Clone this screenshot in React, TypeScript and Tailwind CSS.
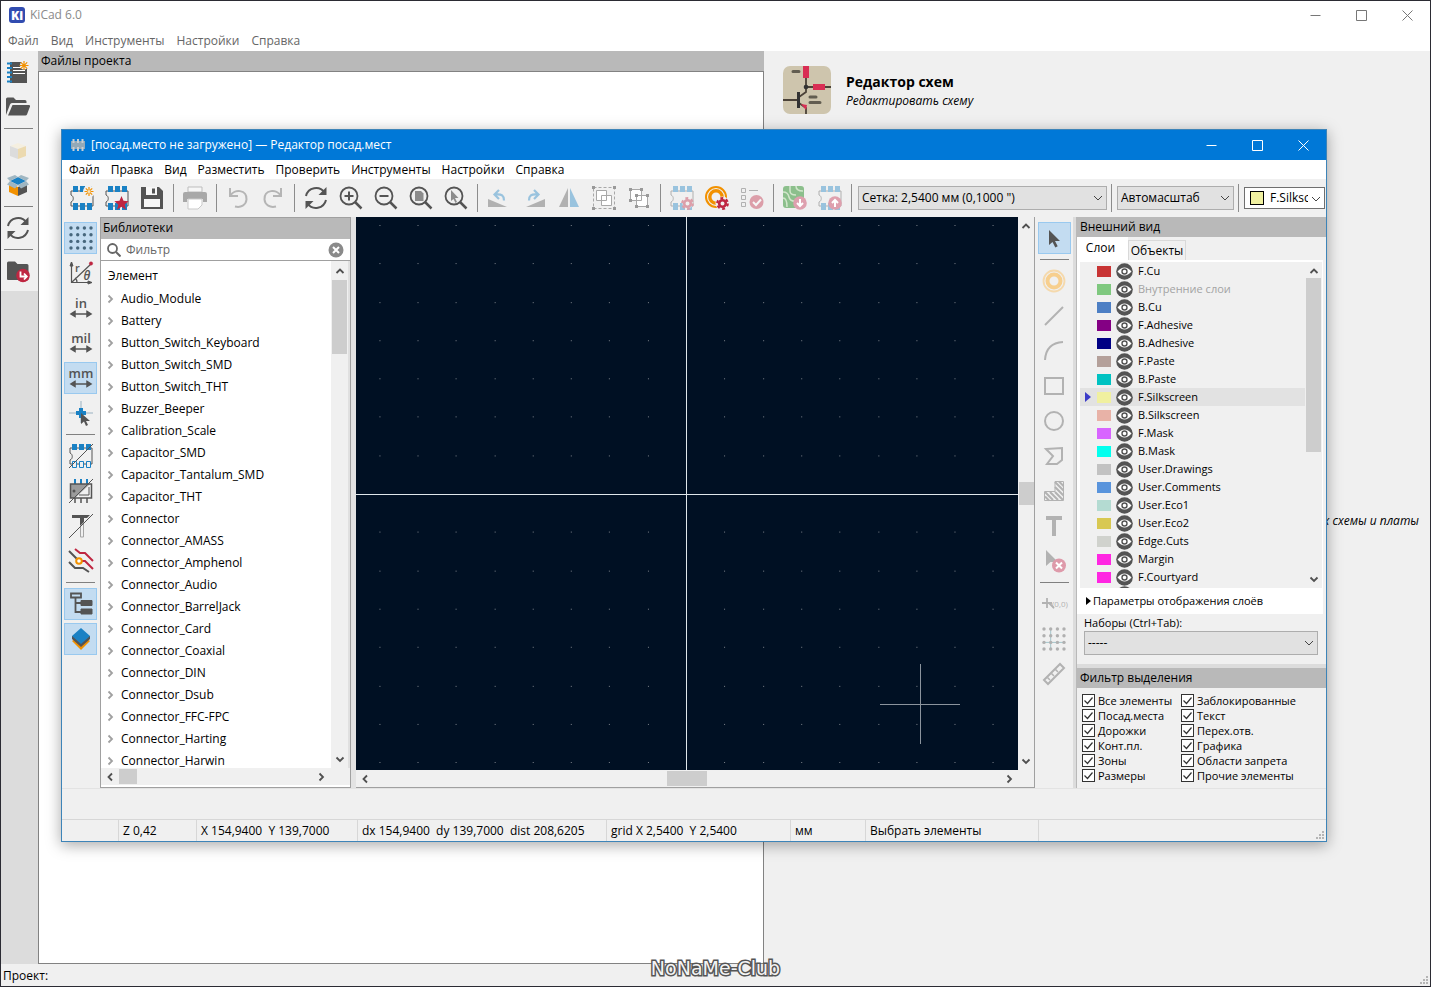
import { useState } from "react";
import type { ReactNode } from "react";

const dark = "#545454";
const blue = "#1a81c4";
const red = "#bf2641";
const orange = "#f29100";

const chip = (
  <g>
    <path d="M1 5v4c3 1 3 6 0 7v4h22V5z" fill="none" stroke={dark} />
    <path d="M3 0h5v6H3zM10 0h5v6h-5zM17 0h5v6h-5zM3 17h5v7H3zM10 17h5v7h-5zM17 17h5v7h-5z" fill={blue} />
  </g>
);

const spark = (
  <g>
    <circle cx="19" cy="5.500" r="6" fill="#f0f0f0" />
    <path d="M19 1v9M14.500 5.500h9M15.800 2.300l6.400 6.400M22.200 2.300l-6.400 6.400" stroke={orange} strokeWidth="1.200" />
    <circle cx="19" cy="5.500" r="1.500" fill="#f7e4c0" />
  </g>
);

const gear = (
  <g>
    <circle cx="17.500" cy="17.500" r="5.300" fill="none" stroke={red} strokeWidth="2.200" strokeDasharray="2.900 2.650" />
    <circle cx="17.500" cy="17.500" r="3.300" fill="none" stroke={red} strokeWidth="2.600" />
  </g>
);

const unit = (name: string) => (
  <g>
    <text x="12" y="12" textAnchor="middle" fontSize="13" fontFamily="Open Sans, sans-serif" fontWeight="600" fill={dark}>{name}</text>
    <path d="M4 18h16M6 15.500L2 18l4 2.500zM18 15.500l4 2.500-4 2.500z" fill={dark} stroke={dark} strokeWidth="1.500" />
  </g>
);

const lens = (
  <g fill="none" stroke={dark}>
    <circle cx="10" cy="10" r="8.500" strokeWidth="1.800" />
    <path d="M16 16l6.500 6.500" strokeWidth="2.500" />
  </g>
);

const icons: Record<string, ReactNode> = {
  newProject: (
    <g>
      <path d="M4 2h17v21H4z" fill={dark} />
      <path d="M1 3.500h5M1 8h5M1 12.500h5M1 17h5M1 21.500h5" stroke={blue} strokeWidth="2" />
      <path d="M7 7.500h9M7 10.500h12M7 13.500h12" stroke="#fff" />
      <circle cx="18" cy="5.500" r="4" fill="#f0f0f0" />
      <path d="M18 1v9M13.500 5.500h9M14.800 2.300l6.400 6.400M21.200 2.300l-6.400 6.400" stroke={orange} strokeWidth="1.200" />
    </g>
  ),
  folderOpen: (
    <g fill={dark}>
      <path d="M0 20V4q0-1.500 1.500-1.500h6L10 5h9q1.500 0 1.500 1.500V8H6q-1.500 0-2 1.500z" />
      <path d="M6.500 10H23q1.500 0 1 1.500l-3 8q-.5 1-1.500 1H2z" />
    </g>
  ),
  archive: (
    <g>
      <path d="M4 8l8-3 8 3-8 3z" fill="#f5efe0" />
      <path d="M4 8l8 3v10l-8-3z" fill="#dcdcdc" />
      <path d="M20 8l-8 3v10l8-3z" fill="#ecdab0" />
    </g>
  ),
  unarchive: (
    <g>
      <path d="M3 10l9 4v9l-9-4z" fill={orange} />
      <path d="M21 10l-9 4v9l9-4z" fill={dark} />
      <path d="M4 8l8-4 8 4-8 4z" fill={blue} />
      <path d="M4 8L1 5l8-3 3 2zM20 8l3-3-8-3-3 2zM4 8l8 4-3 3.500-8-4zM20 8l-8 4 3 3.500 8-4z" fill="#9fb6c2" />
    </g>
  ),
  refresh: (
    <g>
      <path d="M2 10A10.300 10.300 0 0 1 20.500 6.500M22 14A10.300 10.300 0 0 1 3.500 17.500" fill="none" stroke={dark} strokeWidth="2" />
      <path d="M22.500 1v8h-8zM1.500 23v-8h8z" fill={dark} />
    </g>
  ),
  browse: (
    <g>
      <path d="M1 20V4q0-1.500 1.500-1.500H9L11.500 5H21q1.500 0 1.500 1.500V21H2q-1 0-1-1z" fill={dark} />
      <circle cx="17" cy="16.500" r="6.800" fill={red} />
      <path d="M14.500 12.500v5h6M18 14.500l2.800 3L18 20.500" fill="none" stroke="#fff" strokeWidth="1.800" />
    </g>
  ),
  newFootprint: <g>{chip}{spark}</g>,
  wizard: (
    <g>
      {chip}
      <path d="M16.500 10l2 4.800 5.200.4-4 3.300 1.300 5.200-4.500-2.900-4.500 2.900 1.300-5.200-4-3.300 5.200-.4z" fill={red} />
    </g>
  ),
  save: (
    <g>
      <path d="M1 1h18l4 4v18H1z" fill={dark} />
      <path d="M6 1h11v8H6zM4 13h16v8H4z" fill="#f7f7f7" />
      <path d="M12 2.500h3v5h-3z" fill={dark} />
    </g>
  ),
  print: (
    <g>
      <path d="M5 1h14v5H5z" fill="#f6f6f6" stroke="#bdbdbd" />
      <path d="M0 8q0-2 2-2h20q2 0 2 2v8h-4v-3H4v3H0z" fill="#a8a8a8" />
      <path d="M5 13h14v6l-4 4H5z" fill="#fff" stroke="#c9c9c9" />
    </g>
  ),
  undo: <path d="M4 2v8h8M4.500 9.500C8 3 21 3 20.500 13.500 20 19 15 22 9 20.500" fill="none" stroke="#b5b5b5" strokeWidth="2" />,
  redo: <path d="M20 2v8h-8M19.500 9.500C16 3 3 3 3.500 13.500 4 19 9 22 15 20.500" fill="none" stroke="#b5b5b5" strokeWidth="2" />,
  zoomIn: <g>{lens}<path d="M5.500 10h9M10 5.500v9" stroke={dark} strokeWidth="2" /></g>,
  zoomOut: <g>{lens}<path d="M5.500 10h9" stroke={dark} strokeWidth="2" /></g>,
  zoomFit: <g>{lens}<path d="M6 5h6l2.500 2.500V15H6z" fill="#8c8c8c" /></g>,
  zoomSel: <g>{lens}<path d="M7 4v11l2.500-2 2 4 1.500-1-2-4h3.500z" fill="#8c8c8c" /></g>,
  rotateLeft: (
    <g opacity=".4">
      <path d="M1 13l19 8H1z" fill={dark} />
      <path d="M8 8.500c7-1 9 1.500 9 6M12 4L7.500 8.500 12 13" fill="none" stroke={blue} strokeWidth="2.200" />
    </g>
  ),
  rotateRight: (
    <g opacity=".4">
      <path d="M23 13v8H4z" fill={dark} />
      <path d="M16 8.500c-7-1-9 1.500-9 6M12 4l4.500 4.500L12 13" fill="none" stroke={blue} strokeWidth="2.200" />
    </g>
  ),
  mirror: (
    <g opacity=".4">
      <path d="M11 2v19H2z" fill={dark} />
      <path d="M13 2v19h9z" fill={blue} />
    </g>
  ),
  group: (
    <g stroke="#a8a8a8" fill="#fff">
      <path d="M1.500 1.500h21v21h-21z" fill="none" strokeDasharray="3 2" />
      <path d="M4.500 4.500h10v10h-10zM9.500 9.500h10v10h-10z" />
      <path d="M0 0h3v3H0zM21 0h3v3h-3zM0 21h3v3H0zM21 21h3v3h-3z" fill="#999" stroke="none" />
    </g>
  ),
  ungroup: (
    <g stroke="#a8a8a8" fill="#fff">
      <path d="M3.500 3.500h11v11h-11zM9.500 9.500h11v11h-11z" />
      <path d="M2 2h3v3H2zM13 2h3v3h-3zM2 13h3v3H2zM8 8h3v3H8zM19 8h3v3h-3zM8 19h3v3H8zM19 19h3v3h-3z" fill="#999" stroke="none" />
    </g>
  ),
  fpProps: <g opacity=".4">{chip}<circle cx="17.500" cy="17.500" r="5" fill="#f0f0f0" />{gear}</g>,
  padSettings: (
    <g>
      <circle cx="11" cy="11" r="10" fill="none" stroke={orange} strokeWidth="2" />
      <circle cx="11" cy="11" r="6.200" fill="none" stroke={orange} strokeWidth="3.400" />
      <circle cx="17.500" cy="17.500" r="7" fill="#f0f0f0" />
      {gear}
    </g>
  ),
  check: (
    <g opacity=".4">
      <path d="M1.500 2.500h4v4h-4zM1.500 9.500h4v4h-4zM1.500 16.500h4v4h-4z" fill="none" stroke={dark} />
      <path d="M9 4.500h9" stroke={dark} />
      <circle cx="16.500" cy="16" r="7" fill={red} />
      <path d="M13 16l3 3 5-5.500" fill="none" stroke="#fff" strokeWidth="2" />
    </g>
  ),
  fromBoard: (
    <g>
      <g opacity=".6">
        <rect width="21" height="22" rx="3" fill="#4aa04a" />
        <path d="M0 6q5 0 6 5t8 4M0 12q4 0 4 9M7 0v5q0 4 6 4M13 0q0 5 7 5" fill="none" stroke="#bfe0b4" strokeWidth="1.500" />
      </g>
      <circle cx="17" cy="17" r="6.800" fill="#dea0ae" />
      <path d="M17 13v7M14 17l3 3 3-3" fill="none" stroke="#fff" strokeWidth="2" />
    </g>
  ),
  toBoard: (
    <g>
      <g opacity=".4">{chip}</g>
      <circle cx="17" cy="17" r="6.800" fill="#dea0ae" />
      <path d="M17 21v-7M14 17l3-3 3 3" fill="none" stroke="#fff" strokeWidth="2" />
    </g>
  ),
  grid: (
    <g fill="#47677d">
      {[2, 8.7, 15.4, 22].map((y) => [2, 8.7, 15.4, 22].map((x) => <circle key={`${x}-${y}`} cx={x} cy={y} r="1.700" />))}
    </g>
  ),
  polar: (
    <g fill="none" stroke={dark}>
      <path d="M2.500 1v20.500H23M2.500 21.500L22 3M8 21.500q0-3-2-4.500" strokeWidth="1.200" />
      <path d="M1 5l1.500-4L4 5zM19 20l4 1.500-4 1.500z" fill={dark} />
      <circle cx="22" cy="2.500" r="1.700" fill={red} stroke={red} strokeWidth=".5" />
      <g fill={dark} stroke="none" fontFamily="Open Sans, sans-serif" fontWeight="600">
        <text x="6" y="11" fontSize="11">r</text>
        <text x="14.500" y="18.500" fontSize="12" fontStyle="italic">θ</text>
      </g>
    </g>
  ),
  inch: unit("in"),
  mil: unit("mil"),
  mm: unit("mm"),
  cursor: (
    <g>
      <path d="M12 0v22M0 12h24" stroke="#9ab2c2" />
      <path d="M12 7v10M7 12h10" stroke={blue} strokeWidth="4" />
      <path d="M12 12v11l3-2.500 2 4.500 2-1-2-4h4z" fill={dark} />
    </g>
  ),
  padSketch: (
    <g>
      <path d="M1 4v5c3 1 3 6 0 7v4h22V4z" fill="none" stroke={dark} />
      <path d="M3 0h5v6H3zM10 0h5v6h-5zM17 0h5v6h-5z" fill={blue} />
      <path d="M3.500 17.500h4v6h-4zM10.500 17.500h4v6h-4zM17.500 17.500h4v6h-4z" fill="#f0f0f0" stroke={blue} />
      <path d="M0 24L24 0" stroke={dark} />
    </g>
  ),
  graphicSketch: (
    <g>
      <path d="M6 0v5M12 0v5M18 0v5" stroke={blue} strokeWidth="2" />
      <path d="M6 19v5M12 19v5M18 19v5" stroke={dark} strokeWidth="1.500" />
      <path d="M1 5h20L6 19H1z" fill="#9b9b9b" />
      <path d="M1.500 5v14h21V5z" fill="none" stroke={dark} strokeWidth="1.500" />
      <path d="M20 8v8H10" fill="none" stroke={dark} />
      <path d="M0 24L24 0" stroke={dark} />
      <circle cx="5" cy="12" r="1.500" fill={dark} />
    </g>
  ),
  textSketch: (
    <g>
      <path d="M3 1h18l-3 3h-3v4l-4 4V4H3z" fill={dark} />
      <path d="M11.500 13v10h3V10" fill="none" stroke="#a5a5a5" />
      <path d="M0 24L24 0" stroke={dark} />
    </g>
  ),
  contrast: (
    <g fill="none" strokeWidth="2">
      <path d="M6 0l5 4h5l8 8M12 12h4l8 8" stroke={red} />
      <path d="M0 2l8 8M0 13l6 6h8l6 4" stroke={dark} />
      <circle cx="10" cy="12" r="2.800" fill="#fff" stroke={orange} />
    </g>
  ),
  tree: (
    <g>
      <path d="M2 1.500h10v4H2z" fill="none" stroke={dark} strokeWidth="1.800" />
      <path d="M6.500 6v14H13M6.500 11H13" fill="none" stroke={dark} strokeWidth="1.800" />
      <path d="M12 8.500h11v5H12zM12 17h11v5H12z" fill={dark} stroke={dark} strokeLinejoin="round" />
    </g>
  ),
  layers: (
    <g>
      <path d="M12 8l9 6-9 9-9-9z" fill={orange} />
      <path d="M3 12l9 8 9-8v-3H3z" fill={dark} />
      <path d="M12 1l9 8-9 8-9-8z" fill={blue} />
    </g>
  ),
  pointer: <path d="M7 4v15l3.500-3 2.800 5.500 2.400-1.200-2.700-5.300H18z" fill={dark} />,
  pad: (
    <g fill="none" stroke="#f7cf8e">
      <circle cx="12" cy="12" r="10.500" strokeWidth="1.800" opacity=".7" />
      <circle cx="12" cy="12" r="6.500" strokeWidth="4" />
    </g>
  ),
  line: <path d="M3 21L21 3" stroke="#b2b2b2" strokeWidth="2" />,
  arc: <path d="M3 21Q4 4 21 3" fill="none" stroke="#b2b2b2" strokeWidth="2" />,
  rect: <path d="M3 4h18v16H3z" fill="none" stroke="#b2b2b2" strokeWidth="2" />,
  circle: <circle cx="12" cy="12" r="9" fill="none" stroke="#b2b2b2" strokeWidth="2" />,
  poly: <path d="M4 5l16-1v12l-5 4H5l6-8z" fill="none" stroke="#b2b2b2" strokeWidth="2" />,
  zone: (
    <g fill="none" stroke="#b2b2b2">
      <path d="M13 2.500h8.500v19h-19v-9H13z" />
      <path d="M13 3l8.500 8.500M13 8l8.500 8.500M3 13l8 8M8 13l8 8M13 13l8 8M17 2.500l4.500 4.500M3 17.500l4 4" strokeWidth="2" />
    </g>
  ),
  text: <path d="M4 2h16v4h-6v16h-4V6H4z" fill="#b2b2b2" />,
  erase: (
    <g>
      <path d="M4 1v16l4.500-4H16z" fill="#b2b2b2" />
      <circle cx="17" cy="16.500" r="7" fill="#de9aaa" />
      <path d="M14 13.500l6 6M20 13.500l-6 6" stroke="#fff" strokeWidth="2" />
    </g>
  ),
  anchor: (
    <g fill="none" stroke="#b2b2b2">
      <path d="M0 11h10M5 6v10M7 11l5 5" strokeWidth="1.800" />
      <text x="10" y="15" fontSize="8" fontFamily="Open Sans, sans-serif" fill="#b2b2b2" stroke="none">(0,0)</text>
    </g>
  ),
  gridOrigin: (
    <g>
      <path d="M8.700 1v22M1 15.400h22" stroke="#a5c6cc" />
      <g fill="#b0b0b0">
        {[2, 8.7, 15.4, 22].map((y) => [2, 8.7, 15.4, 22].map((x) => <circle key={`${x}-${y}`} cx={x} cy={y} r="1.700" />))}
      </g>
    </g>
  ),
  measure: (
    <g fill="none" stroke="#b2b2b2">
      <path d="M2 18L18 2l4 4L6 22z" strokeWidth="2" />
      <path d="M8 18l-2.500-2.500M12 14l-2.500-2.500M16 10l-2.500-2.500" strokeWidth="1.500" />
    </g>
  ),
};

function Icon({ name }: { name: string }) {
  return (
    <svg viewBox="0 0 24 24" className="size-6 shrink-0 overflow-visible" aria-hidden="true">
      {icons[name]}
    </svg>
  );
}

function HTool({ name }: { name: string }) {
  if (name === "|") return <div className="flex w-2 shrink-0 justify-center"><div className="h-7 w-px bg-[#8c8c8c]" /></div>;
  return (
    <button type="button" aria-label={name} className="flex h-8 w-[35px] shrink-0 items-center justify-center">
      <Icon name={name} />
    </button>
  );
}

function VTools({ items, active = [] }: { items: string[]; active?: string[] }) {
  return (
    <div className="flex flex-col items-center gap-[3px]">
      {items.map((name, i) =>
        name === "|" ? (
          <div key={i} className="flex h-[5px] items-center"><div className="h-px w-[29px] bg-[#808080]" /></div>
        ) : (
          <button
            key={i}
            type="button"
            aria-label={name}
            className={`flex h-8 w-[33px] items-center justify-center border ${
              active.includes(name) ? "border-[#99c9ef] bg-[#c3dcf1]" : "border-transparent"
            }`}
          >
            <Icon name={name} />
          </button>
        )
      )}
    </div>
  );
}

function Chevron({ dir, className = "" }: { dir: "up" | "down" | "left" | "right"; className?: string }) {
  const d = {
    up: "M1.500 7L5 3.500 8.500 7",
    down: "M1.500 3.500L5 7l3.500-3.500",
    left: "M7 1.500L3.500 5 7 8.500",
    right: "M3.500 1.500L7 5 3.500 8.500",
  }[dir];
  return (
    <svg viewBox="0 0 10 10" className={`size-2.5 shrink-0 ${className}`} aria-hidden="true">
      <path d={d} fill="none" stroke="currentColor" strokeWidth="1.800" />
    </svg>
  );
}

function Combo({ label, value, className = "" }: { label: string; value: string; className?: string }) {
  return (
    <div className={`relative h-6 ${className}`}>
      <select aria-label={label} className="size-full appearance-none border border-[#adadad] bg-[#e1e1e1] pl-[3px] pr-5">
        <option>{value}</option>
      </select>
      <svg viewBox="0 0 10 10" className="pointer-events-none absolute top-[7px] right-1 size-2.5" aria-hidden="true">
        <path d="M1 3l4 4 4-4" fill="none" stroke="#444" />
      </svg>
    </div>
  );
}

function WindowButtons({ className }: { className: string }) {
  return (
    <div className={`flex ${className}`}>
      {["M.5 5.500h10", "M.5.5h10v10H.5z", "M.5.5l10 10M10.500.5l-10 10"].map((d, i) => (
        <button key={d} type="button" aria-label={["Свернуть", "Развернуть", "Закрыть"][i]} className="flex h-7 w-[46px] items-center justify-center">
          <svg viewBox="0 0 11 11" className="size-[11px]"><path d={d} fill="none" stroke="currentColor" /></svg>
        </button>
      ))}
    </div>
  );
}

const libraries = [
  "Audio_Module", "Battery", "Button_Switch_Keyboard", "Button_Switch_SMD", "Button_Switch_THT",
  "Buzzer_Beeper", "Calibration_Scale", "Capacitor_SMD", "Capacitor_Tantalum_SMD", "Capacitor_THT",
  "Connector", "Connector_AMASS", "Connector_Amphenol", "Connector_Audio", "Connector_BarrelJack",
  "Connector_Card", "Connector_Coaxial", "Connector_DIN", "Connector_Dsub", "Connector_FFC-FPC",
  "Connector_Harting", "Connector_Harwin",
];

const layers = [
  { name: "F.Cu", color: "#c83434" },
  { name: "Внутренние слои", color: "#7fc87f" },
  { name: "B.Cu", color: "#4d7fc4" },
  { name: "F.Adhesive", color: "#840084" },
  { name: "B.Adhesive", color: "#000084" },
  { name: "F.Paste", color: "#b4a09a" },
  { name: "B.Paste", color: "#00c2c2" },
  { name: "F.Silkscreen", color: "#f0f0a0" },
  { name: "B.Silkscreen", color: "#e8b2a7" },
  { name: "F.Mask", color: "#d864ff" },
  { name: "B.Mask", color: "#02ffee" },
  { name: "User.Drawings", color: "#c2c2c2" },
  { name: "User.Comments", color: "#5994dc" },
  { name: "User.Eco1", color: "#b4dbd2" },
  { name: "User.Eco2", color: "#d8c852" },
  { name: "Edge.Cuts", color: "#d0d2cd" },
  { name: "Margin", color: "#ff26e2" },
  { name: "F.Courtyard", color: "#ff26e2" },
];

const filters = [
  "Все элементы", "Заблокированные", "Посад.места", "Текст", "Дорожки", "Перех.отв.",
  "Конт.пл.", "Графика", "Зоны", "Области запрета", "Размеры", "Прочие элементы",
];

function LibraryPanel() {
  const [filter, setFilter] = useState("");
  return (
    <section className="flex w-[251px] shrink-0 flex-col border border-[#a0a0a0] bg-white">
      <h2 className="h-[21px] shrink-0 bg-[#b9b9b9] pl-0.5 leading-[19px]">Библиотеки</h2>
      <div className="flex h-[22px] shrink-0 items-center border-b border-[#a0a0a0] px-1.5">
        <svg viewBox="0 0 14 14" className="size-3.5" aria-hidden="true">
          <circle cx="5.500" cy="5.500" r="4.500" fill="none" stroke="#666" strokeWidth="1.800" />
          <path d="M9 9l4.500 4.500" stroke="#666" strokeWidth="2" />
        </svg>
        <input
          value={filter}
          onChange={(e) => setFilter(e.target.value)}
          placeholder="Фильтр"
          aria-label="Фильтр"
          className="min-w-0 flex-1 pl-[5px] placeholder-[#666] outline-none"
        />
        <button type="button" aria-label="Очистить" onClick={() => setFilter("")}>
          <svg viewBox="0 0 16 16" className="size-4">
            <circle cx="8" cy="8" r="7.500" fill="#8a8a8a" />
            <path d="M5 5l6 6M11 5l-6 6" stroke="#fff" strokeWidth="2" />
          </svg>
        </button>
      </div>
      <div className="flex min-h-0 flex-1 border-r-2 border-[#e0e0e0]">
        <div className="min-w-0 flex-1 overflow-hidden pt-1">
          <div className="h-[23px] pl-[7px] leading-[22px]">Элемент</div>
          <ul>
            {libraries.map((lib) => (
              <li key={lib} className="flex h-[22px] items-center pl-1 leading-[22px]">
                <Chevron dir="right" className="mr-1.5 text-[#a0a0a0]" />
                {lib}
              </li>
            ))}
          </ul>
        </div>
        <div className="flex w-[17px] flex-col items-center bg-[#f0f0f0] pt-[5px] pb-1">
          <Chevron dir="up" className="text-[#505050]" />
          <div className="mt-1 h-[74px] w-[15px] bg-[#cdcdcd]" />
          <Chevron dir="down" className="mt-auto text-[#505050]" />
        </div>
      </div>
      <div className="mb-0.5 flex h-[17px] shrink-0 items-center bg-[#f0f0f0] pr-6 pl-1">
        <Chevron dir="left" className="text-[#505050]" />
        <div className="ml-1 h-[15px] w-[18px] bg-[#cdcdcd]" />
        <Chevron dir="right" className="ml-auto text-[#505050]" />
      </div>
    </section>
  );
}

function Canvas() {
  const steps = Array.from({ length: 41 }, (_, i) => i - 20).filter((i) => i !== 0);
  const step = 38.3;
  return (
    <section className="flex min-w-0 flex-1 flex-col border-r border-b border-[#a0a0a0] bg-[#f0f0f0]">
      <div className="flex min-h-0 flex-1">
        <svg viewBox="0 0 662 552" preserveAspectRatio="xMidYMid slice" className="h-full min-w-0 flex-1 bg-[#001023]">
          {steps.map((r) =>
            steps.map((c) => (
              <rect key={`${r}.${c}`} x={Math.round(330 + c * step)} y={Math.round(276 + r * step)} width="1" height="1" fill="#7d848c" />
            ))
          )}
          <g shapeRendering="crispEdges">
            <path d="M330.500-200v1000M-600 276.500h2000" stroke="#dfe6ea" vectorEffect="non-scaling-stroke" />
            <path d="M564.500 446v80M524 486.500h80" stroke="#8b949d" vectorEffect="non-scaling-stroke" />
          </g>
        </svg>
        <div className="flex w-4 flex-col items-center py-1">
          <Chevron dir="up" className="text-[#505050]" />
          <div className="mt-auto h-[23px] w-[15px] bg-[#cdcdcd]" />
          <Chevron dir="down" className="mt-auto text-[#505050]" />
        </div>
      </div>
      <div className="flex h-[17px] shrink-0 items-center pr-5 pl-1">
        <Chevron dir="left" className="text-[#505050]" />
        <div className="mx-auto h-[15px] w-10 bg-[#cdcdcd]" />
        <Chevron dir="right" className="text-[#505050]" />
      </div>
    </section>
  );
}

function Eye() {
  return (
    <svg viewBox="0 0 17 17" className="size-[17px] shrink-0" aria-hidden="true">
      <circle cx="8.500" cy="8.500" r="8.300" fill="#545454" />
      <path d="M1.500 8.500q7-8 14 0-7 8-14 0z" fill="#fff" />
      <circle cx="8.500" cy="8.500" r="2.500" fill="#fff" stroke="#545454" strokeWidth="1.400" />
    </svg>
  );
}

function LayerRow({ name, color }: { name: string; color: string }) {
  const current = name === "F.Silkscreen";
  return (
    <li className={`flex h-[18px] shrink-0 items-center ${current ? "bg-[#e2e2e2]" : ""}`}>
      <svg viewBox="0 0 6 10" className="mr-1.5 ml-[5px] h-2.5 w-1.5" aria-hidden="true">
        {current && <path d="M0 0l6 5-6 5z" fill="#3c3cc8" />}
      </svg>
      <button type="button" aria-label={`Цвет ${name}`} className="h-[11px] w-3.5" style={{ backgroundColor: color }} />
      <button type="button" aria-label={`Видимость ${name}`} className="mx-[5px]"><Eye /></button>
      <span className={name === "Внутренние слои" ? "text-[#a3a3a3]" : ""}>{name}</span>
    </li>
  );
}

function AppearancePanel() {
  return (
    <aside className="flex w-[250px] shrink-0 flex-col border-l border-[#b9b9b9] text-[11px]">
      <h2 className="h-5 shrink-0 bg-[#b9b9b9] pl-[3px] text-[12px] leading-5">Внешний вид</h2>
      <div role="tablist" className="flex h-[23px] shrink-0 items-end text-[12px]">
        <button type="button" role="tab" aria-selected="true" className="h-full w-[51px] bg-white pr-1 pb-0.5 text-center">Слои</button>
        <button type="button" role="tab" aria-selected="false" className="h-5 w-[58px] border border-b-0 border-[#d9d9d9]">Объекты</button>
      </div>
      <div className="mr-[3px] flex min-h-0 flex-1 flex-col bg-white pt-0.5">
        <div className="mr-px ml-[3px] flex min-h-0 flex-1 bg-[#f0f0f0]">
          <ul className="flex min-w-0 flex-1 flex-col overflow-hidden">
            {layers.map((l) => <LayerRow key={l.name} name={l.name} color={l.color} />)}
            {/* next row peeks out below the fold */}
            <li className="min-h-0 flex-1 overflow-hidden pl-9"><Eye /></li>
          </ul>
          <div className="flex w-[17px] flex-col items-center py-1">
            <Chevron dir="up" className="text-[#505050]" />
            <div className="mt-0.5 h-[174px] w-[15px] bg-[#cdcdcd]" />
            <Chevron dir="down" className="mt-auto text-[#505050]" />
          </div>
        </div>
        <button type="button" className="flex h-[26px] shrink-0 items-center gap-0.5 pl-[9px]">
          <svg viewBox="0 0 5 8" className="h-2 w-[5px]" aria-hidden="true"><path d="M0 0l5 4-5 4z" /></svg>
          Параметры отображения слоёв
        </button>
      </div>
      <div className="shrink-0 pt-px pr-2 pb-[9px] pl-[7px]">
        <div className="h-4 leading-4">Наборы (Ctrl+Tab):</div>
        <Combo label="Наборы" value="-----" className="w-full text-[12px]" />
      </div>
      <div className="h-1 shrink-0 bg-[#dcdcdc]" />
      <h2 className="h-5 shrink-0 bg-[#b9b9b9] pl-[3px] text-[12px] leading-5">Фильтр выделения</h2>
      <div className="grid h-[100px] shrink-0 grid-cols-[99px_1fr] content-start pt-[5px] pl-[5px]">
        {filters.map((f) => (
          <label key={f} className="flex h-[15px] items-center gap-[3px]">
            <span className="relative size-[13px]">
              <input type="checkbox" defaultChecked className="peer block size-full appearance-none border border-[#333] bg-white" />
              <svg viewBox="0 0 13 13" className="pointer-events-none absolute inset-0 hidden peer-checked:block">
                <path d="M2.500 6.500l3 3 5-6" fill="none" stroke="#333" strokeWidth="1.200" />
              </svg>
            </span>
            {f}
          </label>
        ))}
      </div>
    </aside>
  );
}

function FootprintEditor() {
  return (
    <div className="absolute top-32 right-[103px] bottom-36 left-[60px] flex flex-col overflow-hidden border border-[#3d84b8] bg-[#f0f0f0] shadow-[0_3px_14px_rgba(0,0,0,0.35)]">
      <header className="flex h-[30px] shrink-0 items-center bg-[#0078d7] pl-[9px] text-white">
        <svg viewBox="0 0 14 12" className="mr-1.5 h-3 w-3.5" aria-hidden="true">
          <path d="M0 2h14v8H0z" fill="#93a9b8" />
          <path d="M2.500 0v4M7 0v4M11.500 0v4M2.500 8v4M7 8v4M11.500 8v4" stroke="#c9cfd4" strokeWidth="2" />
        </svg>
        <span className="flex-1">[посад.место не загружено] — Редактор посад.мест</span>
        <WindowButtons className="text-white" />
      </header>
      <nav className="flex h-[19px] shrink-0 items-center bg-white pl-[7px]">
        {["Файл", "Правка", "Вид", "Разместить", "Проверить", "Инструменты", "Настройки", "Справка"].map((m) => (
          <button key={m} type="button" className="mr-[11px]">{m}</button>
        ))}
      </nav>
      <div className="flex h-[38px] shrink-0 items-center overflow-hidden pl-0.5">
        {[
          "newFootprint", "wizard", "save", "|", "print", "|", "undo", "redo", "|", "refresh", "zoomIn", "zoomOut", "zoomFit", "zoomSel", "|",
          "rotateLeft", "rotateRight", "mirror", "group", "ungroup", "|", "fpProps", "padSettings", "check", "|", "fromBoard", "toBoard", "|",
        ].map((name, i) => <HTool key={i} name={name} />)}
        <Combo label="Сетка" value={'Сетка: 2,5400 мм (0,1000 ")'} className="ml-[3px] w-[249px]" />
        <HTool name="|" />
        <Combo label="Масштаб" value="Автомасштаб" className="ml-0.5 w-[117px]" />
        <HTool name="|" />
        <div className="relative mr-px ml-0.5 h-[22px] min-w-0 flex-1">
          <select aria-label="Слой" className="size-full appearance-none overflow-hidden border border-[#6f6f6f] bg-white pr-4 pl-[25px]">
            <option>F.Silkscreen</option>
          </select>
          <span className="pointer-events-none absolute top-1 left-1.5 size-3.5 border border-black bg-[#f0f0a0]" />
          <svg viewBox="0 0 10 10" className="pointer-events-none absolute top-[7px] right-1 size-2.5" aria-hidden="true">
            <path d="M1 3l4 4 4-4" fill="none" stroke="#444" />
          </svg>
        </div>
      </div>
      <main className="flex min-h-0 flex-1">
        <div className="w-[38px] shrink-0 pt-[5px] pr-px">
          <VTools
            items={["grid", "polar", "inch", "mil", "mm", "cursor", "|", "padSketch", "graphicSketch", "textSketch", "contrast", "|", "tree", "layers"]}
            active={["grid", "mm", "tree", "layers"]}
          />
        </div>
        <LibraryPanel />
        <div className="w-[5px] shrink-0 bg-[#e3e3e3]" />
        <Canvas />
        <div className="w-[38px] shrink-0 pt-[5px]">
          <VTools
            items={["pointer", "|", "pad", "line", "arc", "rect", "circle", "poly", "zone", "text", "erase", "|", "anchor", "gridOrigin", "measure"]}
            active={["pointer"]}
          />
        </div>
        <div className="w-[3px] shrink-0 bg-[#dcdcdc]" />
        <AppearancePanel />
      </main>
      <div className="h-[31px] shrink-0 border-t border-[#e3e3e3]" />
      <footer className="flex h-[22px] shrink-0 border-t border-[#d7d7d7] leading-[22px] whitespace-pre">
        <div className="w-[57px] border-r border-[#d7d7d7]" />
        <div className="w-[78px] border-r border-[#d7d7d7] pl-1">Z 0,42</div>
        <div className="w-[161px] border-r border-[#d7d7d7] pl-1">X 154,9400  Y 139,7000</div>
        <div className="w-[249px] border-r border-[#d7d7d7] pl-1">dx 154,9400  dy 139,7000  dist 208,6205</div>
        <div className="w-[184px] border-r border-[#d7d7d7] pl-1">grid X 2,5400  Y 2,5400</div>
        <div className="w-[75px] border-r border-[#d7d7d7] pl-1">мм</div>
        <div className="w-[173px] border-r border-[#d7d7d7] pl-1">Выбрать элементы</div>
        <Grip />
      </footer>
    </div>
  );
}

function Grip() {
  return (
    <svg viewBox="0 0 8 8" className="mr-0.5 mb-0.5 ml-auto size-2 self-end" aria-hidden="true">
      <path d="M6 0h2v2H6zM3 3h2v2H3zM6 3h2v2H6zM0 6h2v2H0zM3 6h2v2H3zM6 6h2v2H6z" fill="#b5b5b5" />
    </svg>
  );
}

export default function App() {
  return (
    <div className="relative flex h-screen flex-col overflow-hidden border border-[#2b2b33] bg-[#f0f0f0] font-['Open_Sans','Noto_Sans',sans-serif] text-[12px] leading-4 text-black">
      <header className="flex h-7 shrink-0 items-center bg-white pl-2 text-[#8a8a8a]">
        <svg viewBox="0 0 16 16" className="mr-[5px] size-4" aria-hidden="true">
          <rect width="16" height="16" rx="3" fill="#314cb0" />
          <text x="8" y="12.500" textAnchor="middle" fontSize="12" fontWeight="800" fontFamily="Open Sans, sans-serif" fill="#fff">Ki</text>
        </svg>
        <span className="flex-1">KiCad 6.0</span>
        <WindowButtons className="text-[#777]" />
      </header>
      <nav className="flex h-[22px] shrink-0 items-center bg-white pt-0.5 pl-[7px] text-[#666]">
        {["Файл", "Вид", "Инструменты", "Настройки", "Справка"].map((m) => (
          <button key={m} type="button" className="mr-3">{m}</button>
        ))}
      </nav>
      <main className="flex min-h-0 flex-1">
        <div className="w-[37px] shrink-0 bg-[#dcdcdc]">
          <div className="bg-[#f0f0f0] pt-[5px] pr-[3px] pb-1">
            <VTools items={["newProject", "folderOpen", "|", "archive", "unarchive", "|", "refresh", "|", "browse"]} />
          </div>
        </div>
        <section className="flex w-[726px] shrink-0 flex-col">
          <h2 className="h-5 shrink-0 bg-[#b9b9b9] pl-[3px] leading-5">Файлы проекта</h2>
          <div className="flex-1 border border-[#828282] bg-white" />
        </section>
        <section className="min-w-0 flex-1 pt-[15px] pr-[11px] pl-[19px]">
          <a href="#schematic" className="flex items-center gap-[15px]">
            <svg viewBox="0 0 48 48" className="size-12" aria-hidden="true">
              <rect width="48" height="48" rx="7" fill="#cec5ad" />
              <path d="M23 12v14l-7 5M0 34h14M23 21h25M16 37l7 5v6" fill="none" stroke="#4b4238" strokeWidth="1.800" />
              <path d="M15.500 26v16" stroke="#333" strokeWidth="3" />
              <path d="M20 0h6v12h-6zM30 18h12v6H30zM18 38l6 1-1 5z" fill="#d92e54" />
              <circle cx="23" cy="21" r="2.300" fill="#333" />
              <path d="M10 5.500h6M27 31h6M27 36.500h10" stroke="#625d50" strokeWidth="3" strokeLinecap="round" />
            </svg>
            <span className="pt-0.5">
              <span className="block text-[14px] leading-5 font-bold">Редактор схем</span>
              <span className="block leading-[18px] italic">Редактировать схему</span>
            </span>
          </a>
          <p className="mt-[399px] text-right italic">х схемы и платы</p>
        </section>
      </main>
      <footer className="flex h-[22px] shrink-0 pl-0.5 leading-6">
        Проект:
        <Grip />
      </footer>
      <div className="pointer-events-none absolute inset-x-0 bottom-2 text-center font-['DejaVu_Sans',sans-serif] text-[19px] leading-5 text-[#f4f4f4] [-webkit-text-stroke:3px_#555] [paint-order:stroke_fill]">
        NoNaMe-Club
      </div>
      <FootprintEditor />
    </div>
  );
}
